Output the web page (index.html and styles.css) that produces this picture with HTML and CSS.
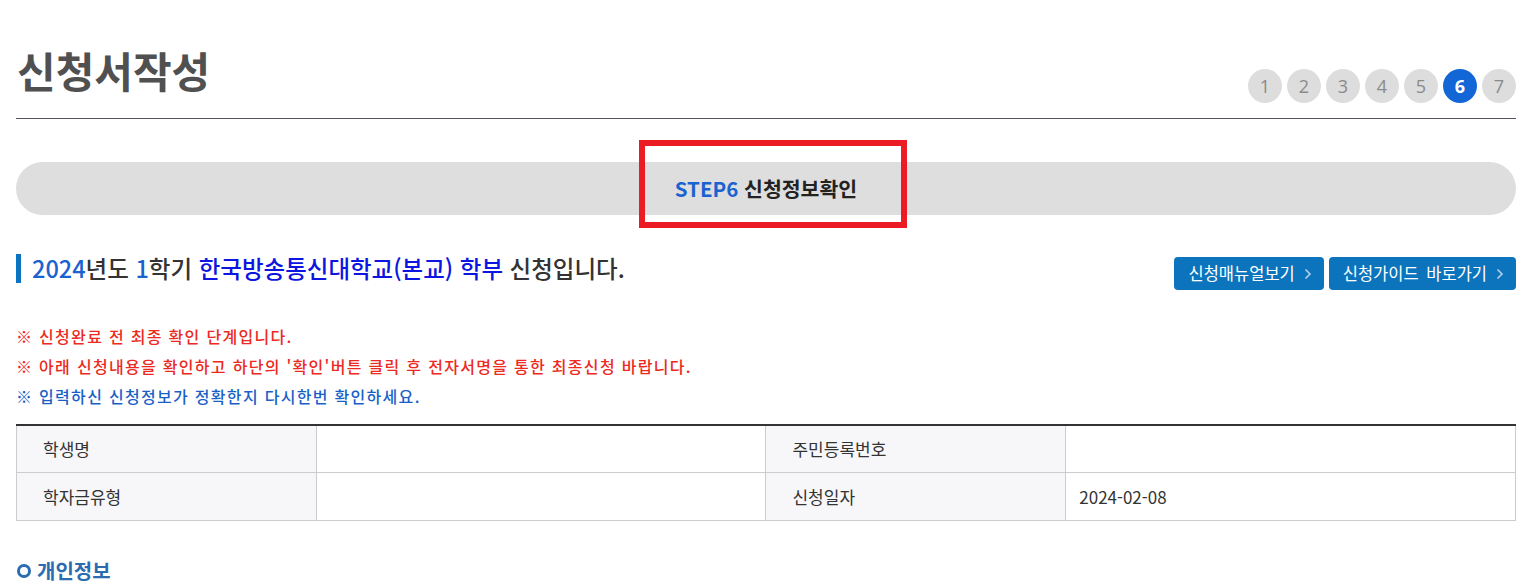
FILE: index.html
```html
<!DOCTYPE html>
<html lang="ko">
<head>
<meta charset="utf-8">
<title>신청서작성</title>
<link rel="stylesheet" href="styles.css">
</head>
<body>
<div class="page">
  <header class="page-head">
    <h1 class="page-title">신청서작성</h1>
    <ol class="steps">
      <li class="step">1</li>
      <li class="step">2</li>
      <li class="step">3</li>
      <li class="step">4</li>
      <li class="step">5</li>
      <li class="step active">6</li>
      <li class="step">7</li>
    </ol>
  </header>

  <div class="step-bar">
    <span class="step-label"><span class="step-no">STEP6</span> 신청정보확인</span>
    <span class="highlight-box"></span>
  </div>

  <div class="intro-row">
    <h2 class="intro-title"><span class="num">2024</span>년도 <span class="num">1</span>학기 <span class="school">한국방송통신대학교(본교) 학부</span> 신청입니다.</h2>
    <div class="btns">
      <a class="btn">신청매뉴얼보기 <svg class="chev" width="8" height="12" viewBox="0 0 8 12"><path d="M1.5 1.5 L6 6 L1.5 10.5" fill="none" stroke="currentColor" stroke-width="1.6"/></svg></a>
      <a class="btn">신청가이드 바로가기 <svg class="chev" width="8" height="12" viewBox="0 0 8 12"><path d="M1.5 1.5 L6 6 L1.5 10.5" fill="none" stroke="currentColor" stroke-width="1.6"/></svg></a>
    </div>
  </div>

  <ul class="notes">
    <li class="red">※ 신청완료 전 최종 확인 단계입니다.</li>
    <li class="red">※ 아래 신청내용을 확인하고 하단의 '확인'버튼 클릭 후 전자서명을 통한 최종신청 바랍니다.</li>
    <li class="blue">※ 입력하신 신청정보가 정확한지 다시한번 확인하세요.</li>
  </ul>

  <table class="info">
    <colgroup><col class="c1"><col class="c2"><col class="c3"><col class="c4"></colgroup>
    <tbody>
      <tr><th>학생명</th><td></td><th>주민등록번호</th><td></td></tr>
      <tr><th>학자금유형</th><td></td><th>신청일자</th><td>2024-02-08</td></tr>
    </tbody>
  </table>

  <h3 class="sec-title"><span class="ring"></span>개인정보</h3>
</div>
</body>
</html>
```

FILE: styles.css
```css
* { box-sizing: border-box; }
html, body { margin: 0; padding: 0; background: #fff; }
body {
  font-family: "Noto Sans CJK KR", "Noto Sans", sans-serif;
  color: #333;
  overflow: hidden;
}
.page { padding: 0 15px 0 16px; }

.page-head {
  display: flex;
  justify-content: space-between;
  align-items: flex-end;
  padding-top: 48px;
  padding-bottom: 15px;
  border-bottom: 1px solid #55525f;
}
.page-title {
  margin: 0 0 11px 1px;
  font-size: 42px;
  line-height: 44px;
  font-weight: 700;
  color: #505050;
  letter-spacing: 0;
}
.steps {
  display: flex;
  gap: 5px;
  list-style: none;
  margin: 0;
  padding: 0;
}
.step {
  width: 34px;
  height: 34px;
  border-radius: 50%;
  background: #dddddd;
  color: #8a8a8a;
  font-family: "Open Sans", sans-serif;
  font-size: 18px;
  line-height: 34px;
  text-align: center;
}
.step.active {
  background: #1366d6;
  color: #fff;
  font-weight: 700;
}

.step-bar {
  position: relative;
  margin-top: 43px;
  height: 53px;
  border-radius: 27px;
  background: #dedede;
  display: flex;
  align-items: center;
  justify-content: center;
}
.step-label {
  font-size: 20.5px;
  font-weight: 700;
  color: #222;
  line-height: 1;
}
.step-no { color: #1a62d0; }
.highlight-box {
  position: absolute;
  left: 623px;
  top: -22px;
  width: 268px;
  height: 88px;
  border: 6px solid #ec1c24;
}

.intro-row {
  display: flex;
  justify-content: space-between;
  align-items: flex-start;
  margin-top: 39px;
}
.intro-title {
  margin: 0;
  padding-left: 11px;
  border-left: 5px solid #0a73c2;
  font-size: 23.5px;
  line-height: 29px;
  font-weight: 500;
  color: #333;
}
.intro-title .num { color: #1a62d0; }
.intro-title .school { color: #0d15e0; }
.btns { display: flex; gap: 5px; margin-top: 3px; }
.btn {
  display: flex;
  align-items: center;
  gap: 9px;
  height: 33px;
  padding: 0 12px 0 14px;
  background: #0b74bc;
  color: #fff;
  border-radius: 4px;
  font-size: 16.5px;
  line-height: 1;
  word-spacing: 3px;
  text-decoration: none;
}
.chev { color: #b7d0ea; }

.notes {
  list-style: none;
  margin: 31px 0 0;
  padding: 0;
  font-size: 16px;
  letter-spacing: 1.3px;
  line-height: 30px;
  font-weight: 500;
}
.notes .red { color: #ec2a22; }
.notes .blue { color: #1a5fc8; }

.info {
  width: 100%;
  margin-top: 13px;
  border-collapse: collapse;
  table-layout: fixed;
  border-top: 2px solid #333;
  font-size: 17px;
  color: #333;
}
.info .c1, .info .c3 { width: 20%; }
.info .c2, .info .c4 { width: 30%; }
.info th, .info td {
  height: 48px;
  border: 1px solid #cccccc;
  padding: 0 13px;
  text-align: left;
  font-weight: 400;
}
.info tr:first-child th, .info tr:first-child td { border-top: 0; height: 47px; }
.info th { background: #f7f7f9; padding-left: 26px; }

.sec-title {
  display: flex;
  align-items: center;
  gap: 6px;
  margin: 35px 0 0;
  font-size: 20px;
  line-height: 30px;
  font-weight: 700;
  color: #2b6cb0;
}
.ring {
  width: 14px;
  height: 14px;
  border: 3.5px solid #2b6cb0;
  border-radius: 50%;
  margin-left: 1px;
}
```
